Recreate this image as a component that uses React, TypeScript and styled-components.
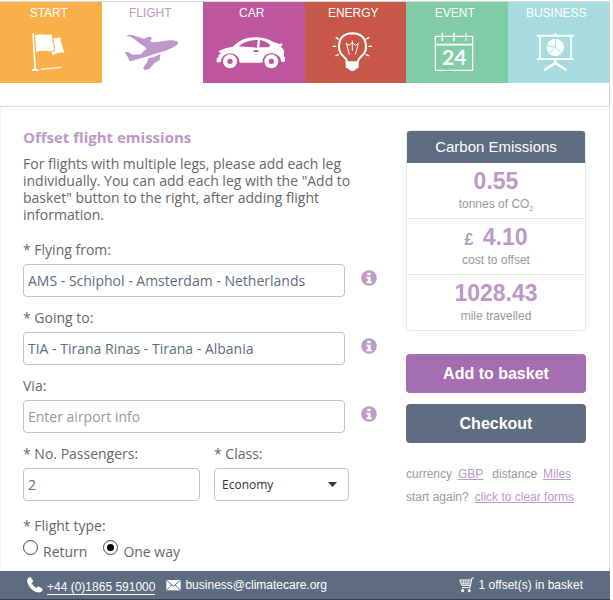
import React from "react";
import styled, { createGlobalStyle } from "styled-components";

const slate = "#5e6c81";
const lilac = "#be98c8";
const sans = `"Liberation Sans", Arial, sans-serif`;
const body = `"Open Sans", "Noto Sans", sans-serif`;

const GlobalStyle = createGlobalStyle`
  * { box-sizing: border-box; }
  body { margin: 0; background: #fff; font-family: ${body}; color: #666; }
`;

const Page = styled.div`
  display: flex;
  flex-direction: column;
  min-height: 100vh;
  padding: 1px 3px 0 0;
`;
const Nav = styled.nav`
  display: grid;
  grid-template-columns: repeat(6, 1fr);
  border-top: 1px solid #dcdcdc;
  border-right: 1px solid #ccc;
  padding-bottom: 23px;
`;
const Tab = styled.a<{ $bg: string; $fg?: string }>`
  display: flex;
  flex-direction: column;
  align-items: center;
  height: 81px;
  padding: 3px 4px 0 0;
  gap: 11px;
  background: ${(p) => p.$bg};
  color: ${(p) => p.$fg || "#fff"};
  font: 12px/16px ${sans};
  text-decoration: none;
`;
const TabIcon = styled.svg`
  width: 72px;
  height: 40px;
  flex: none;
`;
const Main = styled.main`
  display: flex;
  flex: 1;
  justify-content: space-between;
  gap: 29px;
  padding: 22px 23px 0 22px;
  border: solid #dadada;
  border-width: 1px 1px 0;
  border-left-color: #f3f3f3;
`;
const Form = styled.form`
  flex: 1;
  max-width: 354px;
`;
const Title = styled.h1`
  margin: 0;
  font-size: 15px;
  line-height: 16px;
  color: ${lilac};
`;
const Intro = styled.p`
  margin: 10px 0 18px;
  padding-right: 24px;
  font-size: 14px;
  line-height: 17px;
`;
const Label = styled.label`
  display: block;
  padding-bottom: 5px;
  font-size: 14px;
  line-height: 18px;
`;
const Field = styled.div`
  margin-bottom: 12px;
`;
const FieldRow = styled.div`
  display: flex;
  gap: 16px;
`;
const TextBox = styled.input`
  flex: 1;
  width: 100%;
  min-width: 0;
  height: 33px;
  padding: 0 4px;
  border: 1px solid #c4c4c4;
  border-radius: 4px;
  background: #fff;
  color: ${slate};
  font: 14px ${body};
  &::placeholder { color: #999; opacity: 1; }
`;
const InfoButton = styled.button`
  display: flex;
  width: 16px;
  height: 16px;
  margin-top: 6px;
  padding: 0;
  border: 0;
  background: none;
`;
const Pair = styled.div`
  display: grid;
  grid-template-columns: 177fr 135fr;
  gap: 14px;
  padding-right: 28px;
`;
const SelectWrap = styled.div`
  display: grid;
  align-items: center;
  > * { grid-area: 1 / 1; }
  > svg { justify-self: end; margin-right: 12px; pointer-events: none; }
`;
const Select = styled.select`
  appearance: none;
  width: 100%;
  height: 33px;
  padding: 0 7px;
  border: 1px solid #c4c4c4;
  border-radius: 4px;
  background: #fff;
  color: #333;
  font: 12px ${body};
`;
const RadioSet = styled.fieldset`
  display: flex;
  flex-wrap: wrap;
  margin: 16px 0 0;
  padding: 0;
  border: 0;
  font-size: 14px;
  line-height: 18px;
`;
const Legend = styled.legend`
  padding: 0 0 5px;
`;
const RadioLabel = styled.label`
  display: flex;
  gap: 5px;
  margin-right: 16px;
  padding-top: 3px;
`;
const Radio = styled.input`
  appearance: none;
  width: 15px;
  height: 15px;
  margin: -3px 0 0;
  border: 1px solid #444;
  border-radius: 50%;
  &:checked {
    padding: 3px;
    background: #000 content-box;
  }
`;
const Side = styled.aside`
  flex: none;
  width: 180px;
  padding-top: 1px;
  font-family: ${sans};
`;
const Card = styled.section`
  overflow: hidden;
  border: 1px solid #e6e8ee;
  border-radius: 4px;
  text-align: center;
`;
const CardTitle = styled.h2`
  margin: 0;
  background: ${slate};
  color: #fff;
  font-size: 15px;
  font-weight: 400;
  line-height: 32px;
`;
const Stat = styled.div`
  height: 55px;
  padding-top: 5px;
  color: #999;
  font-size: 12px;
  line-height: 18px;
  & + & { height: 56px; border-top: 1px solid #e6e8ee; }
  sub { font-size: 7px; line-height: 0; }
`;
const Value = styled.strong`
  display: block;
  height: 27px;
  color: ${lilac};
  font-size: 23px;
  line-height: 27px;
  small { font-size: 16px; line-height: 1; margin-right: 3px; }
`;
const Button = styled.button<{ $bg: string }>`
  display: block;
  width: 100%;
  height: 39px;
  margin-bottom: 11px;
  padding: 0;
  border: 0;
  border-radius: 4px;
  background: ${(p) => p.$bg};
  color: #fff;
  font: bold 16px ${sans};
`;
const Actions = styled.div`
  padding: 23px 0 9px;
`;
const Option = styled.div`
  display: flex;
  gap: 6px;
  color: #999;
  font-size: 12px;
  line-height: 23px;
  a { color: ${lilac}; }
  a + span { margin-left: 3px; }
`;
const Footer = styled.footer`
  display: flex;
  height: 29px;
  padding: 0 27px;
  border-bottom: 1px solid #343b49;
  background: ${slate};
  color: #fff;
  font: 12px/16px ${sans};
`;
const Contact = styled.a<{ $end?: boolean }>`
  display: flex;
  align-items: flex-start;
  gap: 4px;
  margin-right: 11px;
  padding-top: 6px;
  color: #fff;
  text-decoration: none;
  ${(p) => p.$end && "margin: 0 0 0 auto;"}
`;
const Phone = styled.span`
  margin-top: 3px;
  border-bottom: 1px solid #fff;
  line-height: 14px;
`;

const FlagIcon = () => (
  <TabIcon viewBox="43 96 216 120" fill="currentColor">
    <path d="M101 100l5-1 6 107 8 2v4l-19 1v-5l6-2z" />
    <path d="M160 115q14 1 25-3 1 13 5 23 3 12 8 23-12-2-19 0-9 2-16 8l-9-13z" />
    <path stroke="#fab04a" strokeWidth="3" d="M108 105q12-5 26-3 14 1 27 0 2 24 8 50-15 5-30 2-14-2-28 4z" />
    <path d="M127 206l61-6v4l-61 5z" />
  </TabIcon>
);
const PlaneIcon = () => (
  <TabIcon viewBox="348 96 216 120" fill="currentColor">
    <path d="M385 107q8-5 20-1l34 11q9-8 20-6 5 4 1 7-1 4-5 5l9 4q17-2 34-4 26-5 41 2 4 3-4 11-10 8-36 17l-57 18q-16 5-30 8-9 5-17 4-5-3-3-9-8-8-12-17 8-3 16 3l6 4 28-1 5-7 11-11q-19-12-36-27-10-9-25-11z" />
    <path d="M451 175q18-2 34-12l3 2-3 7 1 8q-9 4-17 10l-16 18q-6 2-14 1-6-5-1-9l10-14z" />
  </TabIcon>
);
const CarIcon = () => (
  <TabIcon viewBox="52 96 216 120" fill="currentColor">
    <path fillRule="evenodd" d="M54 187V175l7-5-2-5 8-4-8-7 8-4q16-7 35-10 15-15 32-22 17-7 42-6 26 1 48 14l19 6 7-2 1 7-6 2 6 6q4 3 5 10v15l3 2v13h-11q-3-23-29-26-27 2-28 29h-68q-2-26-29-28-25 2-28 27zM119 139l56 4 2-23q-31-2-58 19zM184 120l-2 22h28l5-6q-11-12-31-16zM165 150v6h14v-6z" />
    <circle cx="94" cy="184" r="21" /><circle cx="94" cy="184" r="8" fill="#be559f" />
    <circle cx="218" cy="184" r="21" /><circle cx="218" cy="184" r="8" fill="#be559f" />
  </TabIcon>
);
const BulbIcon = () => (
  <TabIcon viewBox="357 96 216 120" fill="none" stroke="currentColor">
    <path strokeWidth="6" d="M447 187q0-9-11-18-13-12-13-28 0-40 40-41 40 1 41 41 0 16-14 28-10 9-10 18" />
    <path fill="currentColor" stroke="none" d="M443 184h39v18q-2 4-8 5-3 6-11 6t-11-6q-7-1-9-5z" />
    <path strokeWidth="3" d="M454 164l-9-34 9 6 9-9 9 9 9-6-9 34M463 122v30" />
    <path strokeWidth="4" d="M404 139h11M511 139h11M413 112l10 6M503 118l11-6M412 168l11-5M503 163l11 5" />
  </TabIcon>
);
const CalendarIcon = () => (
  <TabIcon viewBox="62 96 216 120" fill="none" stroke="currentColor">
    <path strokeWidth="4" d="M111 109h112v102H111z" />
    <path strokeWidth="5" d="M111 134h112" />
    <path strokeWidth="5" d="M132 98v25M167 98v25" />
    <path strokeWidth="3" d="M203 98v25" />
    <text x="168" y="196" fontSize="64" fontFamily="Lato" fontWeight="700" textAnchor="middle" fill="currentColor" stroke="none">24</text>
  </TabIcon>
);
const BoardIcon = () => (
  <TabIcon viewBox="366 96 216 120" fill="none" stroke="currentColor">
    <path strokeWidth="6" d="M417 107h110M417 177h110" />
    <path strokeWidth="5" d="M426 107v70M519 107v70M472 99v8" />
    <path strokeWidth="7" d="M472 180v13M438 211l34-22 34 22" />
    <circle cx="472" cy="142" r="26" fill="currentColor" stroke="none" />
    <path stroke="#a6dcdf" strokeWidth="3" d="M472 115v27l20 18M472 142l-18 17M472 142l-27-6" />
  </TabIcon>
);
const InfoIcon = () => (
  <svg width="16" height="16" viewBox="0 0 48 48">
    <circle cx="24" cy="24" r="23.5" fill={lilac} />
    <path fill="#fff" d="M19 8h10v8H19zM16 20h13v15h4v5H16v-5h4V25h-4z" />
  </svg>
);
const PhoneIcon = () => (
  <svg width="16" height="16" viewBox="0 0 48 48" fill="currentColor">
    <path d="M2 5q5-5 9-4l8 11-5 7q4 9 14 14l6-5 13 8q0 6-5 9-8 3-17-1Q6 35 1 15 0 9 2 5z" />
  </svg>
);
const MailIcon = () => (
  <svg width="15" height="16" viewBox="0 0 45 48">
    <path fill="#fff" d="M1 9h43v31H1z" />
    <path fill="none" stroke={slate} strokeWidth="3" d="M2 10l20 18 21-18M2 39l15-15M43 39L28 24" />
  </svg>
);
const CartIcon = () => (
  <svg width="16" height="16" viewBox="0 0 48 48" fill="none" stroke="currentColor">
    <path strokeWidth="3" d="M45 3h-6l-6 29H9M2 9h34M2 9l6 16h26" />
    <path strokeWidth="2" d="M5 15h31M7 20h27M12 9l3 16M20 9l1 16M28 9l-1 16" />
    <circle cx="11" cy="41" r="4" fill="currentColor" /><circle cx="31" cy="41" r="4" fill="currentColor" />
  </svg>
);

const tabs = [
  { name: "START", bg: "#fab04a", Icon: FlagIcon },
  { name: "FLIGHT", bg: "#fff", fg: lilac, Icon: PlaneIcon },
  { name: "CAR", bg: "#be559f", Icon: CarIcon },
  { name: "ENERGY", bg: "#c75847", Icon: BulbIcon },
  { name: "EVENT", bg: "#80cca6", Icon: CalendarIcon },
  { name: "BUSINESS", bg: "#a6dcdf", Icon: BoardIcon },
];

const airports = [
  { id: "from", label: "* Flying from:", value: "AMS - Schiphol - Amsterdam - Netherlands" },
  { id: "to", label: "* Going to:", value: "TIA - Tirana Rinas - Tirana - Albania" },
  { id: "via", label: "Via:", value: "" },
];

export default function App() {
  return (
    <>
      <GlobalStyle />
      <Page>
        <Nav>
          {tabs.map(({ name, bg, fg, Icon }) => (
            <Tab key={name} href="#" $bg={bg} $fg={fg}>
              <span>{name}</span>
              <Icon />
            </Tab>
          ))}
        </Nav>
        <Main>
          <Form>
            <Title>Offset flight emissions</Title>
            <Intro>
              For flights with multiple legs, please add each leg individually. You can add each leg
              with the "Add to basket" button to the right, after adding flight information.
            </Intro>
            {airports.map((a) => (
              <Field key={a.id}>
                <Label htmlFor={a.id}>{a.label}</Label>
                <FieldRow>
                  <TextBox id={a.id} defaultValue={a.value} placeholder="Enter airport info" />
                  <InfoButton type="button" aria-label="Airport information">
                    <InfoIcon />
                  </InfoButton>
                </FieldRow>
              </Field>
            ))}
            <Pair>
              <div>
                <Label htmlFor="passengers">* No. Passengers:</Label>
                <TextBox id="passengers" defaultValue="2" />
              </div>
              <div>
                <Label htmlFor="class">* Class:</Label>
                <SelectWrap>
                  <Select id="class" defaultValue="Economy">
                    <option>Economy</option>
                    <option>Business</option>
                  </Select>
                  <svg width="9" height="5" viewBox="0 0 18 10">
                    <path d="M0 0h18L9 10z" fill="#333" />
                  </svg>
                </SelectWrap>
              </div>
            </Pair>
            <RadioSet>
              <Legend>* Flight type:</Legend>
              <RadioLabel>
                <Radio type="radio" name="type" />
                Return
              </RadioLabel>
              <RadioLabel>
                <Radio type="radio" name="type" defaultChecked />
                One way
              </RadioLabel>
            </RadioSet>
          </Form>
          <Side>
            <Card>
              <CardTitle>Carbon Emissions</CardTitle>
              <Stat>
                <Value>0.55</Value>tonnes of CO<sub>2</sub>
              </Stat>
              <Stat>
                <Value><small>£</small> 4.10</Value>cost to offset
              </Stat>
              <Stat>
                <Value>1028.43</Value>mile travelled
              </Stat>
            </Card>
            <Actions>
              <Button type="button" $bg="#a56eb0">Add to basket</Button>
              <Button type="button" $bg={slate}>Checkout</Button>
            </Actions>
            <Option>
              <span>currency</span><a href="#">GBP</a>
              <span>distance</span><a href="#">Miles</a>
            </Option>
            <Option>
              <span>start again?</span><a href="#">click to clear forms</a>
            </Option>
          </Side>
        </Main>
        <Footer>
          <Contact href="tel:+441865591000"><PhoneIcon /><Phone>+44 (0)1865 591000</Phone></Contact>
          <Contact href="mailto:business@climatecare.org"><MailIcon />business@climatecare.org</Contact>
          <Contact href="#" $end><CartIcon />1 offset(s) in basket</Contact>
        </Footer>
      </Page>
    </>
  );
}
